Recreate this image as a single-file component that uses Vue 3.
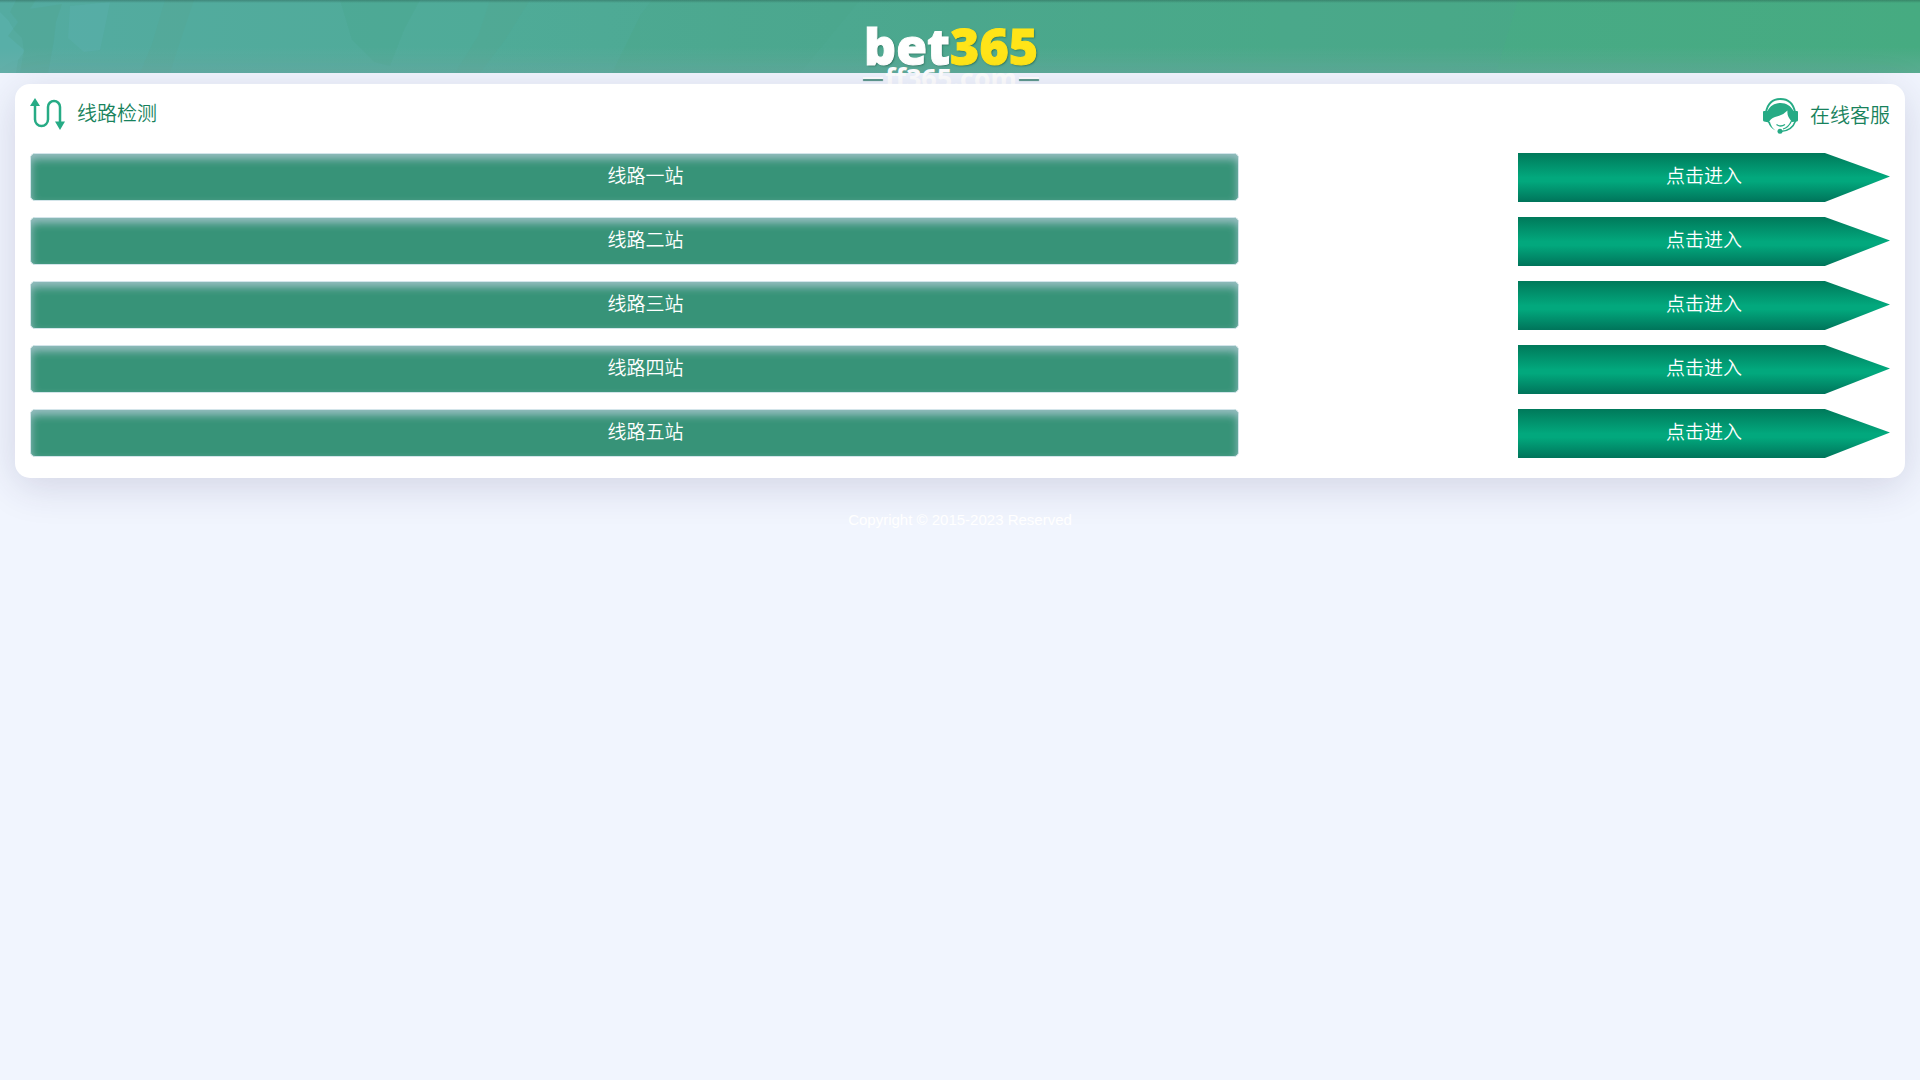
<template>
  <div class="page">
    <header class="header">
      <svg class="header-bg" viewBox="0 0 1920 73" preserveAspectRatio="none" aria-hidden="true">
        <path d="M0 12L8 20L14 30L22 38L24 52L18 60L16 73H0Z" fill="#5cb3ad" opacity=".6" />
        <path d="M16 0H36L30 9L62 4L56 22L54 40L48 73H20L24 50L8 36L18 22L10 12Z" fill="#4ea38c" opacity=".3" />
        <path d="M70 6L110 2L106 22L100 50L84 52L68 38Z" fill="#59afab" opacity=".5" />
        <path d="M165 0H194L186 24L178 48L170 73H140L152 44Z" fill="#55a792" opacity=".3" />
        <path d="M340 0H420L404 30L390 66L374 62L352 40Z" fill="#4aa68c" opacity=".3" />
        <path d="M490 0H530L505 40L480 73H455L478 36Z" fill="#57a78d" opacity=".2" />
        <path d="M640 16V73H612Z" fill="#4ba784" opacity=".3" />
        <path d="M640 16L652 0H860L800 73H640Z" fill="#49a489" opacity=".2" />
        <path d="M1280 0H1518L1496 73H1280Z" fill="#4ba58d" opacity=".3" />
      </svg>
      <div class="logo">
        <div class="logo-main">bet<span>365</span></div>
        <div class="logo-sub">ff365.com</div>
      </div>
    </header>

    <main class="card">
      <div class="card-head">
        <div class="title">
          <svg width="35" height="32" viewBox="0 0 35 32" aria-hidden="true">
            <path
              d="M5 6V21.500a6.500 6.500 0 0 0 13 0V9a6 6 0 0 1 12 0V25"
              fill="none"
              stroke="#26ab85"
              stroke-width="2.500"
            />
            <path d="M5 0L10 8H0ZM30 32L35 23.500H25Z" fill="#26ab85" />
          </svg>
          <span>线路检测</span>
        </div>
        <a class="service" href="#">
          <svg width="35" height="36" viewBox="0 0 35 36" aria-hidden="true">
            <path d="M3 14C5 4.500 11 1 17.500 1S30 4.500 32 14" fill="none" stroke="#26ab85" stroke-width="1.800" />
            <path
              d="M4.500 13C7 8 11.500 5 17.500 5S28 8 30.500 13H34Q35 13 35 14V22Q35 23 34 23.500L29 24Q26.500 21 25.500 19Q24 16 24.500 12.500Q20 17.500 12 19Q7 20.500 6 24.500L1 23.500Q0 23 0 22V14Q0 13 1 13Z"
              fill="#26ab85"
            />
            <path d="M5 24Q7 30 12.500 32.500Q8 29 7 24Z" fill="#26ab85" />
            <path d="M13.500 26.500Q17.500 29.500 22 26.500" fill="none" stroke="#26ab85" stroke-width="1.300" />
            <path d="M32.500 23Q29 33 17.500 33.500" fill="none" stroke="#26ab85" stroke-width="1.600" />
            <path d="M28.500 23Q25.500 29.500 20 31" fill="none" stroke="#26ab85" stroke-width="1.200" />
            <circle cx="17" cy="33.300" r="2.500" fill="#26ab85" />
          </svg>
          <span>在线客服</span>
        </a>
      </div>

      <ul class="lines">
        <li v-for="line in lines" :key="line.name" class="line">
          <div class="line-name">{{ line.name }}</div>
          <a class="line-enter" :href="line.url">点击进入</a>
        </li>
      </ul>
    </main>

    <footer class="footer">Copyright © 2015-2023 Reserved</footer>
  </div>
</template>

<script setup>
const lines = [
  { name: "线路一站", url: "#" },
  { name: "线路二站", url: "#" },
  { name: "线路三站", url: "#" },
  { name: "线路四站", url: "#" },
  { name: "线路五站", url: "#" },
];
</script>

<style>
body {
  margin: 0;
  background: #f1f5fe;
}
</style>

<style scoped>
.page {
  font-family: "Liberation Sans", "Noto Sans CJK SC", sans-serif;
}

.header {
  position: relative;
  display: flex;
  justify-content: center;
  box-sizing: border-box;
  height: 73px;
  padding-right: 18px;
  background: linear-gradient(to right, #54aba1, #4fab98 25%, #4ba78d 50%, #48aa86 75%, #46ab81);
}

.header-bg {
  position: absolute;
  inset: 0;
  width: 100%;
  height: 100%;
}

/* 上の暗い線と下の明るいぼかし */
.header::after {
  content: "";
  position: absolute;
  inset: 0;
  background:
    linear-gradient(rgba(30, 70, 60, 0.35), rgba(30, 70, 60, 0)) top / 100% 3px no-repeat,
    linear-gradient(to top, rgba(120, 175, 170, 0.4), rgba(120, 175, 170, 0)) bottom / 100% 26px no-repeat;
}

.logo {
  position: relative;
  z-index: 1;
  width: 176px;
  padding-top: 26px;
  color: #fff;
  white-space: nowrap;
}

.logo-main {
  display: flex;
  justify-content: center;
  font: 800 50px/40px "Open Sans", sans-serif;
  text-shadow: 1px 1px 2px rgba(20, 80, 60, 0.7);
  -webkit-text-stroke: 1px #fff;
}

.logo-main span {
  color: #ffe418;
  -webkit-text-stroke-color: #ffe418;
}

.logo-sub {
  display: flex;
  align-items: center;
  justify-content: space-between;
  font: 700 27px/24px "Noto Sans", sans-serif;
}

.logo-sub::before,
.logo-sub::after {
  content: "";
  width: 20px;
  height: 2px;
  background: #fff;
  box-shadow: 0 2px 1px #4f8f83;
}

.card {
  position: relative;
  z-index: 2;
  margin: 11px 15px 0;
  padding: 14px 15px 20px;
  border-radius: 15px;
  background: #fff;
  box-shadow: 0 8px 40px rgba(45, 35, 90, 0.16);
}

.card-head {
  display: flex;
  justify-content: space-between;
  height: 55px;
  color: #17825c;
  font-size: 20px;
  font-weight: 350;
}

.title,
.service {
  display: flex;
  gap: 12px;
  height: 32px;
  line-height: 32px;
}

.service {
  color: inherit;
  line-height: 36px;
  text-decoration: none;
}

.lines {
  display: flex;
  flex-direction: column;
  gap: 15px;
  margin: 0;
  padding: 0;
  list-style: none;
}

.line {
  display: flex;
  justify-content: space-between;
  height: 49px;
  color: #fff;
  font-size: 19px;
  font-weight: 350;
  line-height: 48px;
  text-align: center;
}

.line-name {
  box-sizing: border-box;
  width: 65%;
  height: 48px;
  padding-left: 22px;
  border: 1px solid #d3e5ea;
  border-radius: 5px;
  background: #379378;
  line-height: 46px;
  box-shadow: inset 0 5px 8px rgba(220, 220, 245, 0.6);
}

.line-enter {
  width: 20%;
  background: linear-gradient(#00795a, #02a87d 50%, #02a87d 58%, #00745a);
  clip-path: polygon(0 0, 82.5% 0, 100% 48%, 82.5% 100%, 0 100%);
  color: inherit;
  text-decoration: none;
}

.footer {
  position: relative;
  z-index: 3;
  margin-top: 32px;
  color: #fff;
  font-size: 15px;
  line-height: 20px;
  text-align: center;
}
</style>
